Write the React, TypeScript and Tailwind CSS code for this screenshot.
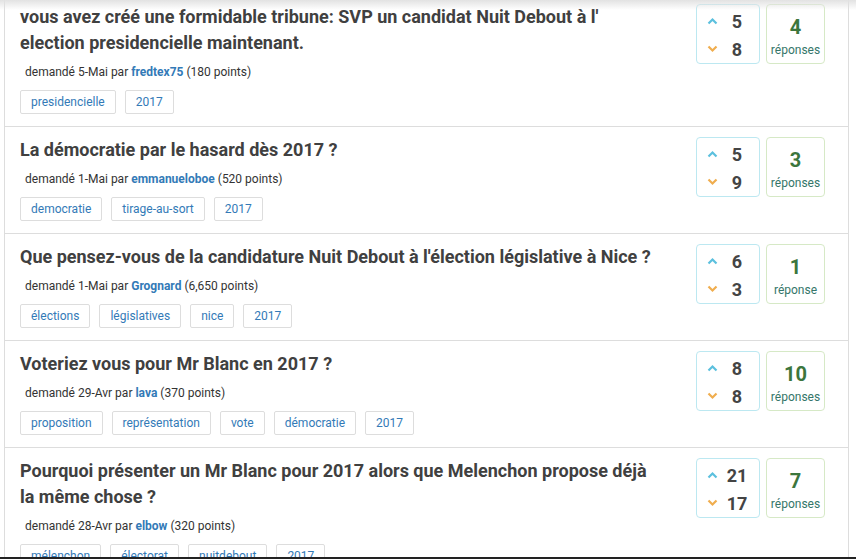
import React from "react";

type Q = {
  title: string;
  date: string;
  user: string;
  points: string;
  tags: string[];
  up: number;
  down: number;
  answers: number;
};

const qs: Q[] = [
  {
    title:
      "vous avez créé une formidable tribune: SVP un candidat Nuit Debout à l' election presidencielle maintenant.",
    date: "5-Mai",
    user: "fredtex75",
    points: "180",
    tags: ["presidencielle", "2017"],
    up: 5,
    down: 8,
    answers: 4,
  },
  {
    title: "La démocratie par le hasard dès 2017 ?",
    date: "1-Mai",
    user: "emmanueloboe",
    points: "520",
    tags: ["democratie", "tirage-au-sort", "2017"],
    up: 5,
    down: 9,
    answers: 3,
  },
  {
    title:
      "Que pensez-vous de la candidature Nuit Debout à l'élection législative à Nice ?",
    date: "1-Mai",
    user: "Grognard",
    points: "6,650",
    tags: ["élections", "législatives", "nice", "2017"],
    up: 6,
    down: 3,
    answers: 1,
  },
  {
    title: "Voteriez vous pour Mr Blanc en 2017 ?",
    date: "29-Avr",
    user: "lava",
    points: "370",
    tags: ["proposition", "représentation", "vote", "démocratie", "2017"],
    up: 8,
    down: 8,
    answers: 10,
  },
  {
    title:
      "Pourquoi présenter un Mr Blanc pour 2017 alors que Melenchon propose déjà la même chose ?",
    date: "28-Avr",
    user: "elbow",
    points: "320",
    tags: ["mélenchon", "électorat", "nuitdebout", "2017"],
    up: 21,
    down: 17,
    answers: 7,
  },
];

function Chevron({ up }: { up: boolean }) {
  return (
    <svg width="11" height="8" viewBox="0 0 11 8" className="block">
      {up ? (
        <polyline points="1.5,6.5 5.5,2.5 9.5,6.5" fill="none" stroke="#5bc0de" strokeWidth="2.2" />
      ) : (
        <polyline points="1.5,1.5 5.5,5.5 9.5,1.5" fill="none" stroke="#f0ad4e" strokeWidth="2.2" />
      )}
    </svg>
  );
}

function Row({ q, first }: { q: Q; first: boolean }) {
  return (
    <div
      className={
        "flex border-b border-[#dddddd] pt-[10px] pb-[12px] pl-[15px] pr-[23px]" +
        (first ? " mt-[-6px]" : "")
      }
    >
      <div className="flex-1 min-w-0 pr-[36px]">
        <div className="text-[18px] leading-[26px] font-bold text-[#404040]">{q.title}</div>
        <div className="mt-[8px] pl-[5px] text-[12px] leading-[16px] text-[#333333]">
          demandé {q.date} par{" "}
          <span className="font-bold text-[#337ab7]">{q.user}</span> ({q.points} points)
        </div>
        <div className="mt-[10px] flex gap-[9px]">
          {q.tags.map((t) => (
            <span
              key={t}
              className="h-[24px] flex items-center px-[10px] border border-[#dddddd] rounded-[2px] text-[12px] text-[#337ab7]"
            >
              {t}
            </span>
          ))}
        </div>
      </div>
      <div className="flex gap-[6px] shrink-0 items-start">
        <div className="w-[64px] h-[60px] border border-[#bce8f1] rounded-[4px] py-[2px]">
          <div className="flex items-center h-[28px]">
            <div className="ml-[10px] w-[11px]">
              <Chevron up={true} />
            </div>
            <div className="ml-[4px] w-[30px] text-center text-[18px] font-bold text-[#444444]">{q.up}</div>
          </div>
          <div className="flex items-center h-[28px]">
            <div className="ml-[10px] w-[11px]">
              <Chevron up={false} />
            </div>
            <div className="ml-[4px] w-[30px] text-center text-[18px] font-bold text-[#444444]">{q.down}</div>
          </div>
        </div>
        <div className="w-[59px] h-[60px] border border-[#d6e9c6] rounded-[4px] pt-[10px] flex flex-col items-center">
          <div className="text-[20px] leading-[24px] font-bold text-[#3c763d]">{q.answers}</div>
          <div className="mt-[4px] text-[12px] leading-[14px] text-[#35766a]">
            {q.answers === 1 ? "réponse" : "réponses"}
          </div>
        </div>
      </div>
    </div>
  );
}

export default function App() {
  return (
    <div
      className="relative w-[856px] h-[559px] overflow-hidden bg-white"
      style={{ fontFamily: "Roboto, 'Liberation Sans', sans-serif" }}
    >
      <div className="ml-[4px] w-[845px] border-l border-r border-[#dddddd] min-h-[600px]">
        {qs.map((q, i) => (
          <Row key={i} q={q} first={i === 0} />
        ))}
      </div>
      <div className="absolute top-0 left-0 right-0 h-[10px] bg-gradient-to-b from-[#e2e2e2] to-[rgba(255,255,255,0)]" />
      <div className="absolute bottom-0 left-0 right-0 h-[2px] bg-[#222222]" />
    </div>
  );
}
